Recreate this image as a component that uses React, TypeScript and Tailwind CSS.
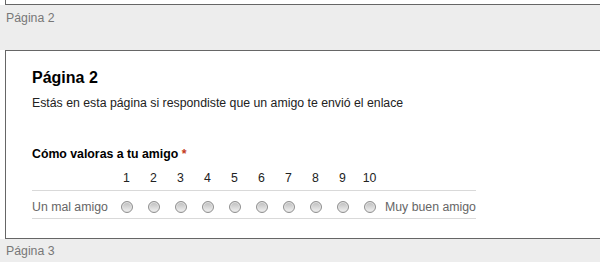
import React from 'react';

const scale = [1, 2, 3, 4, 5, 6, 7, 8, 9, 10];

const Radio = () => (
    <span className="block h-[12px] w-[12px] rounded-full border border-[#8f8f8f] bg-gradient-to-b from-[#bdbdbd] to-[#f2f2f2] shadow-[inset_0_0_0_1px_#e4e4e4]" />
);

const App = () => {
    return (
        <div
            className="h-[262px] w-[600px] overflow-hidden bg-white text-[12.3px] leading-[14px]"
            style={{ fontFamily: '"Liberation Sans", Arial, sans-serif' }}
        >
            {/* tail of the previous page */}
            <div className="ml-[5px] h-[5px] border-b border-l border-[#666]" />

            <div className="h-[45px] bg-[#ededed] pl-[6px] pt-[6px] text-[#777]">Página 2</div>

            {/* page card */}
            <div className="ml-[5px] h-[189px] w-[700px] border-y border-l border-[#666] bg-white pl-[26px] pt-[18px]">
                <h2 className="text-[16px] font-bold leading-[18px] text-black">Página 2</h2>
                <p className="mt-[9px] text-[#222]">Estás en esta página si respondiste que un amigo te envió el enlace</p>

                <div className="mt-[37px] font-bold text-black">
                    Cómo valoras a tu amigo <span className="text-[#c43b1d]">*</span>
                </div>

                <div className="mt-[10px] w-[444px]">
                    <div className="flex h-[20px] border-b border-[#d9d9d9] text-[#222]">
                        <div className="w-[81px] shrink-0" />
                        {scale.map((n) => (
                            <div key={n} className="w-[27px] shrink-0 text-center">
                                {n}
                            </div>
                        ))}
                    </div>
                    <div className="flex h-[28px] items-center border-b border-[#d9d9d9] pt-[5px] text-[#666]">
                        <div className="w-[81px] shrink-0 whitespace-nowrap">Un mal amigo</div>
                        {scale.map((n) => (
                            <div key={n} className="flex w-[27px] shrink-0 justify-center">
                                <Radio />
                            </div>
                        ))}
                        <div className="whitespace-nowrap pl-[2px]">Muy buen amigo</div>
                    </div>
                </div>
            </div>

            <div className="h-[40px] bg-[#ededed] pl-[6px] pt-[5px] text-[#777]">Página 3</div>
        </div>
    );
};

export default App;
